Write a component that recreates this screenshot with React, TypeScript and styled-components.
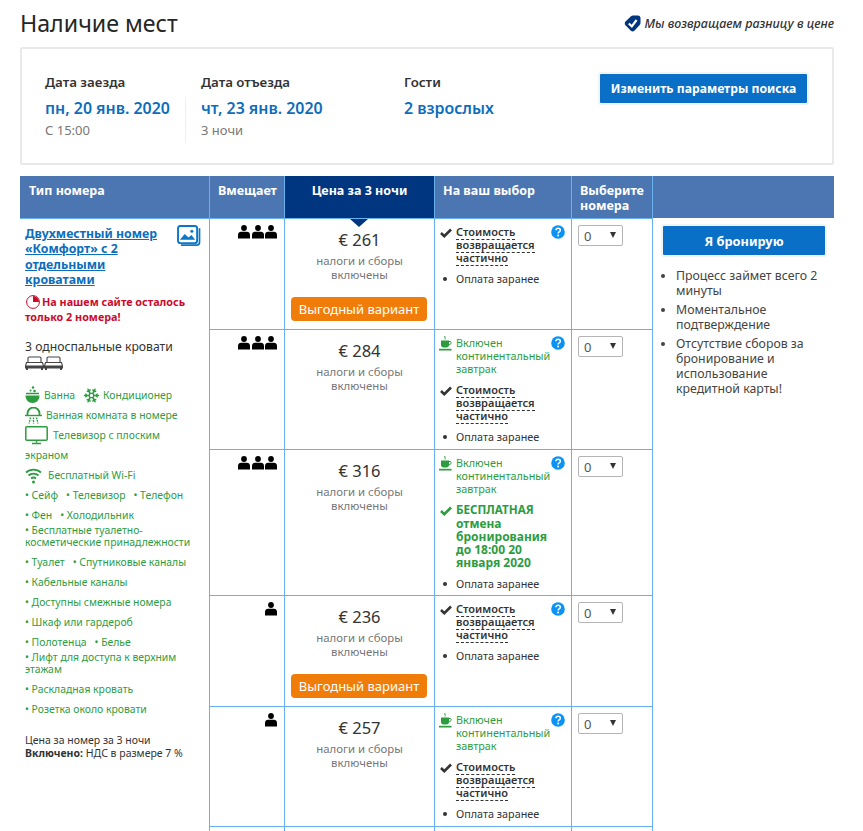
import React from "react";
import styled, { createGlobalStyle } from "styled-components";
import { Snowflake } from "lucide-react";

const FONT = `"Noto Sans", "Open Sans", Arial, sans-serif`;

const Global = createGlobalStyle`
  html, body { margin: 0; padding: 0; background: #fff; height: 831px; overflow: hidden; }
  body { font-family: ${FONT}; color: #333; }
`;

const Page = styled.div`
  width: 814px;
  padding: 0 29px 0 20px;
`;

const TopBar = styled.div`
  height: 47px;
  display: flex;
  align-items: center;
  justify-content: space-between;
`;

const Title = styled.h1`
  margin: 0;
  font-size: 23.2px;
  font-weight: 400;
  color: #262626;
  position: relative;
  top: -1px;
`;

const Promise_ = styled.div`
  display: flex;
  align-items: center;
  gap: 3px;
  font-size: 12.5px;
  font-style: italic;
  font-weight: 500;
  color: #333;
`;

const SearchBox = styled.section`
  box-sizing: border-box;
  height: 118px;
  border: 2px solid #e9e9e9;
  border-radius: 2px;
  display: flex;
  padding: 24px 0 0 23px;
`;

const Stay = styled.div<{ $width: number }>`
  width: ${(p) => p.$width}px;
  box-sizing: border-box;
  display: flex;
  flex-direction: column;
`;

const StayLabel = styled.div`
  font-size: 13.3px;
  font-weight: 600;
  line-height: 18px;
  color: #333;
`;

const StayValue = styled.div`
  font-size: 15.9px;
  font-weight: 600;
  line-height: 20px;
  margin-top: 7px;
  color: #0c6dbd;
`;

const StayNote = styled.div`
  font-size: 13px;
  line-height: 18px;
  margin-top: 3px;
  color: #777;
`;

const Divider = styled.div`
  width: 1px;
  height: 46px;
  margin: 24px 15px 0 0;
  background: #eee;
`;

const ChangeButton = styled.button`
  box-sizing: border-box;
  width: 207px;
  height: 29px;
  margin: 1px 0 0 0;
  align-self: flex-start;
  border: 0;
  border-radius: 1px;
  background: #0a6fc7;
  box-shadow: 0 0 0 2px #f1f4f7;
  color: #fff;
  font-family: ${FONT};
  font-size: 12.2px;
  font-weight: 700;
  padding: 0;
`;

const Table = styled.table`
  margin-top: 11px;
  width: 814px;
  table-layout: fixed;
  border-collapse: separate;
  border-spacing: 0;
`;

const HeadCell = styled.th<{ $dark?: boolean; $center?: boolean }>`
  box-sizing: border-box;
  height: 42px;
  padding: 8px 8px 0;
  vertical-align: top;
  text-align: ${(p) => (p.$center ? "center" : "left")};
  background: ${(p) => (p.$dark ? "#003580" : "#4c76b2")};
  color: #fff;
  font-size: 12.5px;
  font-weight: 700;
  line-height: 14.5px;
  border-left: 1px solid #69b0ee;

  &:first-child { border-left: 0; padding-left: 9px; }
`;

const Cell = styled.td`
  box-sizing: border-box;
  vertical-align: top;
  border-left: 1px solid #69b0ee;
  border-top: 1px solid #69b0ee;
  padding: 0;
`;

const RoomCell = styled.td`
  box-sizing: border-box;
  vertical-align: top;
  border-top: 1px solid #69b0ee;
  padding: 7px 8px 0 5px;
  overflow: hidden;
`;

const BookCell = styled.td`
  box-sizing: border-box;
  vertical-align: top;
  border-left: 1px solid #69b0ee;
  padding: 8px 9px 0 10px;
`;

const Row = styled.tr<{ $height: number }>`
  height: ${(p) => p.$height}px;
`;

const RoomHead = styled.div`
  display: flex;
  justify-content: space-between;
  align-items: flex-start;

  svg { margin-top: -1px; }
`;

const RoomName = styled.a`
  font-size: 12.3px;
  font-weight: 700;
  line-height: 15.3px;
  color: #0c6dbd;
  text-decoration: underline;
  white-space: nowrap;
`;

const Scarcity = styled.div`
  margin-top: 7px;
  font-size: 10.8px;
  font-weight: 700;
  line-height: 15px;
  color: #cc0a2b;
  white-space: nowrap;

  svg { vertical-align: -3px; margin-right: 1px; }
`;

const BedText = styled.div`
  margin-top: 15px;
  font-size: 12.2px;
  line-height: 16px;
  color: #333;
  white-space: nowrap;
`;

const Beds = styled.div`
  display: flex;
  height: 22px;
  margin-bottom: 8px;
  padding-top: 1px;
  box-sizing: border-box;
`;

const Facilities = styled.div`
  color: #2c9c3f;
  font-size: 10.4px;
  white-space: nowrap;
`;

const FacilityLine = styled.div`
  height: 20px;
  line-height: 20px;
  display: flex;
  align-items: center;
`;

const FacilityItem = styled.span`
  margin-right: 8px;
`;

const FacilityIcon = styled.span<{ $gap?: number }>`
  display: inline-flex;
  margin-right: ${(p) => p.$gap ?? 4}px;
`;

const FacilityWrapped = styled.div`
  line-height: 11.7px;
  padding: 0 0 3.6px;
`;

const Summary = styled.div`
  margin-top: 15px;
  font-size: 10.5px;
  line-height: 13px;
  color: #333;
  white-space: nowrap;

  b { font-weight: 700; }
`;

const Occupancy = styled.div`
  display: flex;
  justify-content: flex-end;
  gap: 1.5px;
  padding: 6px 7px 0 0;
`;

const PriceBox = styled.div`
  position: relative;
  text-align: center;
  padding-top: 11px;
`;

const Pointer = styled.div`
  position: absolute;
  top: 0;
  left: 65px;
  width: 0;
  height: 0;
  border-left: 9px solid transparent;
  border-right: 9px solid transparent;
  border-top: 8px solid #003580;
`;

const Price = styled.div`
  font-size: 16.5px;
  line-height: 20px;
  color: #333;
`;

const TaxNote = styled.div`
  margin-top: 4px;
  font-size: 11.4px;
  line-height: 14px;
  color: #777;
`;

const DealBadge = styled.div`
  margin: 15px 7px 0 6px;
  height: 24px;
  line-height: 24px;
  border-radius: 4px;
  background: #f07d0a;
  color: #fff;
  font-size: 13px;
`;

const Options = styled.div`
  position: relative;
  padding: 6px 0 0 4px;
  font-size: 10.8px;
  line-height: 13px;
`;

const Help = styled.div`
  position: absolute;
  top: 6px;
  right: 6px;
  display: flex;
`;

const Option = styled.div`
  display: flex;
  margin-bottom: 8px;

  &:last-child { margin-bottom: 0; }
`;

const OptionIcon = styled.div`
  width: 17px;
  flex: none;
  display: flex;
  align-items: flex-start;
`;

const Breakfast = styled.div`
  color: #2c9c3f;
`;

const Refund = styled.div`
  font-size: 11px;
  font-weight: 600;
  color: #333;

  span { border-bottom: 1px dashed #333; }
`;

const FreeCancel = styled.div`
  font-size: 12px;
  line-height: 13px;
  font-weight: 700;
  color: #2c9c3f;

  em { font-style: normal; font-size: 11.6px; line-height: 13px; margin-bottom: 1px; display: block; }
`;

const Prepay = styled.div`
  color: #333;
`;

const Dot = styled.span`
  width: 4px;
  height: 4px;
  margin: 5px 0 0 4px;
  border-radius: 50%;
  background: #333;
`;

const SelectWrap = styled.div`
  position: relative;
  width: 45px;
  height: 21px;
  margin: 6px 0 0 6px;

  &::after {
    content: "";
    position: absolute;
    top: 7px;
    right: 7px;
    border-left: 3.5px solid transparent;
    border-right: 3.5px solid transparent;
    border-top: 6px solid #333;
    pointer-events: none;
  }
`;

const Select = styled.select`
  display: block;
  appearance: none;
  box-sizing: border-box;
  width: 100%;
  height: 100%;
  padding: 0 0 0 5px;
  border: 1px solid #b5b5b5;
  border-radius: 2px;
  background: #fff;
  color: #555;
  font-family: ${FONT};
  font-size: 13px;
`;

const BookButton = styled.button`
  display: block;
  width: 162px;
  height: 29px;
  border: 0;
  border-radius: 1px;
  background: #0a6fc7;
  box-shadow: 0 0 0 2px #f1f4f7;
  color: #fff;
  font-family: ${FONT};
  font-size: 12.8px;
  font-weight: 700;
  padding: 0;
`;

const Perks = styled.ul`
  margin: 13px 0 0;
  padding: 0 0 0 13px;
  font-size: 12.3px;
  line-height: 15px;
  color: #444;
  white-space: nowrap;
`;

const Perk = styled.li`
  margin-bottom: 4px;
`;

/* ---------- icons ---------- */

const Badge = () => (
  <svg width="17" height="17" viewBox="0 0 17 17">
    <path d="M1.500 6.500 7 1.300c.6-.6 1.300-.8 2-.8h5c1.400 0 2.500 1.100 2.500 2.500v5c0 .8-.3 1.400-.8 2l-5.400 5.700c-1 1-2.400 1-3.400 0L1.500 10.300c-1-1-1-2.800 0-3.800Z" fill="#003580" />
    <path d="M4.800 8.500 7.800 11.300 12.600 5" fill="none" stroke="#fff" strokeWidth="2.200" />
  </svg>
);

const PhotoIcon = () => (
  <svg width="24" height="21" viewBox="0 0 25 22">
    <rect x="1" y="1" width="20" height="18" rx="2.500" fill="#fff" stroke="#0c77c8" strokeWidth="2" />
    <path d="M23.500 3.500V18a3 3 0 0 1-3 3H4" fill="none" stroke="#0c77c8" strokeWidth="1.800" />
    <path d="M3 15.500 8 9.500l4 3.500 3-2.500 4 5Z" fill="#0c77c8" />
    <circle cx="15.500" cy="6.500" r="1.600" fill="#0c77c8" />
  </svg>
);

const ClockIcon = () => (
  <svg width="16" height="14" viewBox="0 0 14 14">
    <circle cx="7" cy="7" r="6.400" fill="#fff" stroke="#cc0a2b" strokeWidth="1" />
    <path d="M7 7V1a6 6 0 0 1 6 6Z" fill="#cc0a2b" />
  </svg>
);

const BedIcon = () => (
  <svg width="19" height="14" viewBox="0 0 19 14">
    <path d="M3 6V2.200C3 1.500 3.500 1 4.200 1h10.600c.7 0 1.200.5 1.200 1.200V6" fill="none" stroke="#444" strokeWidth="1.100" />
    <path d="M1.500 6.500h16l1 3.500H.5Z" fill="none" stroke="#444" strokeWidth="1.100" />
    <rect x="0" y="10" width="19" height="2.500" fill="#444" />
    <rect x="1" y="12" width="2" height="2" fill="#444" />
    <rect x="16" y="12" width="2" height="2" fill="#444" />
  </svg>
);

const BathIcon = () => (
  <svg width="15" height="18" viewBox="0 0 15 18">
    <circle cx="8" cy="1.500" r="1.200" fill="#2c9c3f" />
    <circle cx="5.500" cy="4.500" r="1" fill="#2c9c3f" />
    <circle cx="9.500" cy="5" r="1.300" fill="#2c9c3f" />
    <path d="M1 7.500h13" stroke="#2c9c3f" strokeWidth="1.500" />
    <path d="M.5 9.500h14c0 4.500-3 7.500-7 7.500s-7-3-7-7.500Z" fill="#2c9c3f" />
  </svg>
);

const ShowerIcon = () => (
  <svg width="17" height="17" viewBox="0 0 17 17" fill="none" stroke="#2c9c3f" strokeWidth="1.300">
    <path d="M2.500 8V6.500a6 6 0 0 1 12 0V8" strokeWidth="1.800" />
    <path d="M0 8.500h17" strokeWidth="1.400" />
    <path d="M8.500 10.500v6M5.500 10.500l-1.500 6M11.500 10.500l1.500 6" strokeDasharray="1.800 .8" />
  </svg>
);

const TvIcon = () => (
  <svg width="23" height="19" viewBox="0 0 23 19" fill="none" stroke="#2c9c3f">
    <rect x=".8" y=".8" width="21.400" height="13.400" rx="1" strokeWidth="1.500" />
    <path d="M11.500 14.500v2M7 17.500h9" strokeWidth="1.500" />
  </svg>
);

const WifiIcon = () => (
  <svg width="17" height="17" viewBox="0 0 17 17" fill="none" stroke="#2c9c3f" strokeWidth="1.800">
    <path d="M1 5.500a11 11 0 0 1 15 0" />
    <path d="M3.500 8.500a7.500 7.500 0 0 1 10 0" />
    <path d="M6 11.500a4 4 0 0 1 5 0" />
    <circle cx="8.500" cy="15" r="1.500" fill="#2c9c3f" stroke="none" />
  </svg>
);

const CoffeeIcon = () => (
  <svg width="13" height="15" viewBox="0 0 13 15">
    <path d="M6 0c-1 1.500 1 2 0 3.500" fill="none" stroke="#2c9c3f" />
    <path d="M2 4.500h8v4.500c0 1.500-1 2.500-2.500 2.500h-3C3 11.500 2 10.500 2 9Z" fill="#2c9c3f" />
    <path d="M10 5.500h1.500c1 0 1 3-1.500 3.500" fill="none" stroke="#2c9c3f" />
    <rect x="0" y="12.800" width="12.500" height="1.700" fill="#2c9c3f" />
  </svg>
);

const CheckMark = styled.svg`
  margin: 3px 0 0 1px;
`;

const CheckIcon = ({ color }: { color: string }) => (
  <CheckMark width="12" height="10" viewBox="0 0 12 10">
    <path d="M1 5 4.300 8.200 11 1.500" fill="none" stroke={color} strokeWidth="2.600" />
  </CheckMark>
);

const HelpIcon = () => (
  <svg width="14" height="14" viewBox="0 0 14 14">
    <circle cx="7" cy="7" r="6.800" fill="#0a93f5" />
    <path d="M4.900 5.300C5 4 6 3.300 7.100 3.300c1.300 0 2.200.8 2.200 1.900 0 1.700-2.200 1.700-2.200 3.300" fill="none" stroke="#fff" strokeWidth="1.500" />
    <circle cx="7.100" cy="10.600" r="1" fill="#fff" />
  </svg>
);

const PersonIcon = () => (
  <svg width="12" height="14" viewBox="0 0 12 14">
    <circle cx="6" cy="3" r="2.900" fill="#000" />
    <path d="M0 13.500V10c0-2 1.500-3.200 3-3.200h6c1.500 0 3 1.200 3 3.200v3.500Z" fill="#000" />
  </svg>
);

/* ---------- data ---------- */

type RowData = {
  height: number;
  guests: number;
  price: string;
  deal?: boolean;
  breakfast?: boolean;
  free?: boolean;
};

const rows: RowData[] = [
  { height: 111, guests: 3, price: "€ 261", deal: true },
  { height: 120, guests: 3, price: "€ 284", breakfast: true },
  { height: 146, guests: 3, price: "€ 316", breakfast: true, free: true },
  { height: 111, guests: 1, price: "€ 236", deal: true },
  { height: 120, guests: 1, price: "€ 257", breakfast: true },
];

const RoomInfo = () => (
  <>
    <RoomHead>
      <RoomName href="#room">
        Двухместный номер
        <br />
        «Комфорт» с 2
        <br />
        отдельными
        <br />
        кроватами
      </RoomName>
      <PhotoIcon />
    </RoomHead>
    <Scarcity>
      <ClockIcon />
      На нашем сайте осталось
      <br />
      только 2 номера!
    </Scarcity>
    <BedText>3 односпальные кровати</BedText>
    <Beds>
      <BedIcon />
      <BedIcon />
    </Beds>
    <Facilities>
      <FacilityLine>
        <FacilityIcon><BathIcon /></FacilityIcon>
        <FacilityItem>Ванна</FacilityItem>
        <FacilityIcon $gap={3}><Snowflake size={17} strokeWidth={2} strokeDasharray="3 1" /></FacilityIcon>
        <FacilityItem>Кондиционер</FacilityItem>
      </FacilityLine>
      <FacilityLine>
        <FacilityIcon><ShowerIcon /></FacilityIcon>
        <FacilityItem>Ванная комната в номере</FacilityItem>
      </FacilityLine>
      <FacilityLine>
        <FacilityIcon $gap={5}><TvIcon /></FacilityIcon>
        <FacilityItem>Телевизор с плоским</FacilityItem>
      </FacilityLine>
      <FacilityLine>экраном</FacilityLine>
      <FacilityLine>
        <FacilityIcon $gap={6}><WifiIcon /></FacilityIcon>
        <FacilityItem>Бесплатный Wi-Fi</FacilityItem>
      </FacilityLine>
      <FacilityLine>
        <FacilityItem>• Сейф</FacilityItem>
        <FacilityItem>• Телевизор</FacilityItem>
        <FacilityItem>• Телефон</FacilityItem>
      </FacilityLine>
      <FacilityLine>
        <FacilityItem>• Фен</FacilityItem>
        <FacilityItem>• Холодильник</FacilityItem>
      </FacilityLine>
      <FacilityWrapped>
        • Бесплатные туалетно-
        <br />
        косметические принадлежности
      </FacilityWrapped>
      <FacilityLine>
        <FacilityItem>• Туалет</FacilityItem>
        <FacilityItem>• Спутниковые каналы</FacilityItem>
      </FacilityLine>
      <FacilityLine>• Кабельные каналы</FacilityLine>
      <FacilityLine>• Доступны смежные номера</FacilityLine>
      <FacilityLine>• Шкаф или гардероб</FacilityLine>
      <FacilityLine>
        <FacilityItem>• Полотенца</FacilityItem>
        <FacilityItem>• Белье</FacilityItem>
      </FacilityLine>
      <FacilityWrapped>
        • Лифт для доступа к верхним
        <br />
        этажам
      </FacilityWrapped>
      <FacilityLine>• Раскладная кровать</FacilityLine>
      <FacilityLine>• Розетка около кровати</FacilityLine>
    </Facilities>
    <Summary>
      Цена за номер за 3 ночи
      <br />
      <b>Включено:</b> НДС в размере 7 %
    </Summary>
  </>
);

const BookInfo = () => (
  <>
    <BookButton>Я бронирую</BookButton>
    <Perks>
      <Perk>
        Процесс займет всего 2
        <br />
        минуты
      </Perk>
      <Perk>
        Моментальное
        <br />
        подтверждение
      </Perk>
      <Perk>
        Отсутствие сборов за
        <br />
        бронирование и
        <br />
        использование
        <br />
        кредитной карты!
      </Perk>
    </Perks>
  </>
);

export default function App() {
  return (
    <Page>
      <Global />
      <TopBar>
        <Title>Наличие мест</Title>
        <Promise_>
          <Badge />
          Мы возвращаем разницу в цене
        </Promise_>
      </TopBar>
      <SearchBox>
        <Stay $width={140}>
          <StayLabel>Дата заезда</StayLabel>
          <StayValue>пн, 20 янв. 2020</StayValue>
          <StayNote>С 15:00</StayNote>
        </Stay>
        <Divider />
        <Stay $width={203}>
          <StayLabel>Дата отъезда</StayLabel>
          <StayValue>чт, 23 янв. 2020</StayValue>
          <StayNote>3 ночи</StayNote>
        </Stay>
        <Stay $width={196}>
          <StayLabel>Гости</StayLabel>
          <StayValue>2 взрослых</StayValue>
        </Stay>
        <ChangeButton>Изменить параметры поиска</ChangeButton>
      </SearchBox>
      <Table>
        <colgroup>
          <col width="189" />
          <col width="75" />
          <col width="150" />
          <col width="137" />
          <col width="81" />
          <col width="182" />
        </colgroup>
        <thead>
          <tr>
            <HeadCell>Тип номера</HeadCell>
            <HeadCell>Вмещает</HeadCell>
            <HeadCell $dark $center>Цена за 3 ночи</HeadCell>
            <HeadCell>На ваш выбор</HeadCell>
            <HeadCell>
              Выберите
              <br />
              номера
            </HeadCell>
            <HeadCell />
          </tr>
        </thead>
        <tbody>
          {rows.map((r, i) => (
            <Row key={r.price} $height={r.height}>
              {i === 0 && (
                <RoomCell rowSpan={rows.length + 1}>
                  <RoomInfo />
                </RoomCell>
              )}
              <Cell>
                <Occupancy>
                  {Array.from({ length: r.guests }, (_, k) => (
                    <PersonIcon key={k} />
                  ))}
                </Occupancy>
              </Cell>
              <Cell>
                <PriceBox>
                  {i === 0 && <Pointer />}
                  <Price>{r.price}</Price>
                  <TaxNote>
                    налоги и сборы
                    <br />
                    включены
                  </TaxNote>
                  {r.deal && <DealBadge>Выгодный вариант</DealBadge>}
                </PriceBox>
              </Cell>
              <Cell>
                <Options>
                  <Help><HelpIcon /></Help>
                  {r.breakfast && (
                    <Option>
                      <OptionIcon><CoffeeIcon /></OptionIcon>
                      <Breakfast>
                        Включен
                        <br />
                        континентальный
                        <br />
                        завтрак
                      </Breakfast>
                    </Option>
                  )}
                  {r.free ? (
                    <Option>
                      <OptionIcon><CheckIcon color="#2c9c3f" /></OptionIcon>
                      <FreeCancel>
                        <em>БЕСПЛАТНАЯ</em>
                        отмена
                        <br />
                        бронирования
                        <br />
                        до 18:00 20
                        <br />
                        января 2020
                      </FreeCancel>
                    </Option>
                  ) : (
                    <Option>
                      <OptionIcon><CheckIcon color="#333" /></OptionIcon>
                      <Refund>
                        <span>Стоимость</span>
                        <br />
                        <span>возвращается</span>
                        <br />
                        <span>частично</span>
                      </Refund>
                    </Option>
                  )}
                  <Option>
                    <OptionIcon><Dot /></OptionIcon>
                    <Prepay>Оплата заранее</Prepay>
                  </Option>
                </Options>
              </Cell>
              <Cell>
                <SelectWrap>
                  <Select defaultValue="0" aria-label="Выберите номера">
                    <option value="0">0</option>
                    <option value="1">1</option>
                    <option value="2">2</option>
                  </Select>
                </SelectWrap>
              </Cell>
              {i === 0 && (
                <BookCell rowSpan={rows.length + 1}>
                  <BookInfo />
                </BookCell>
              )}
            </Row>
          ))}
          <Row $height={6}>
            <Cell />
            <Cell />
            <Cell />
            <Cell />
          </Row>
        </tbody>
      </Table>
    </Page>
  );
}
